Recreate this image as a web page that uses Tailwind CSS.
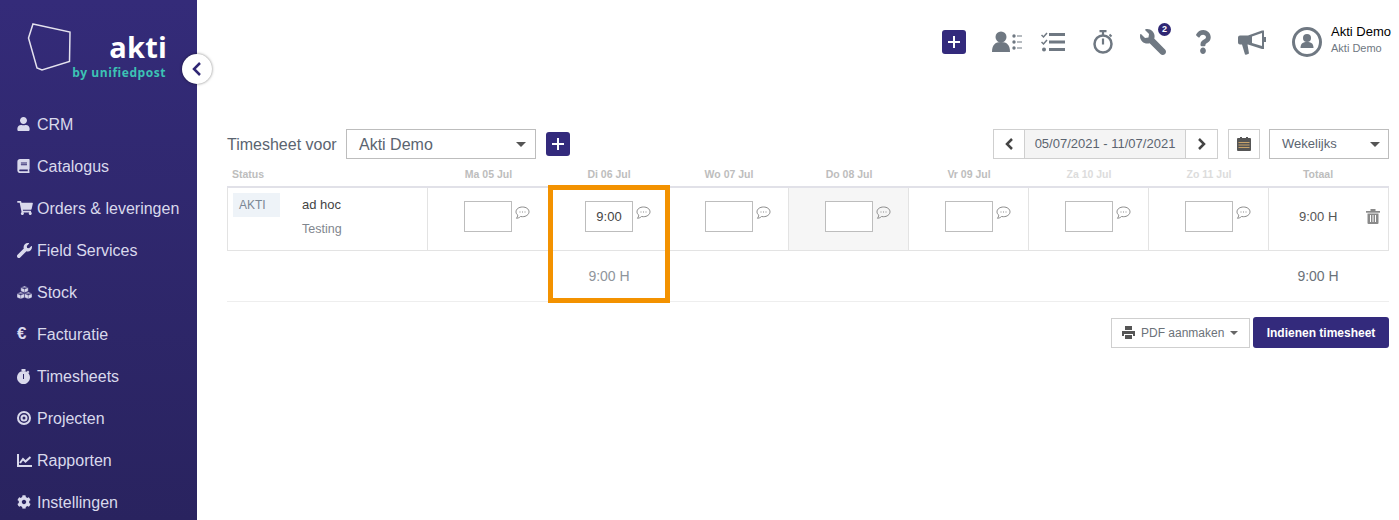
<!DOCTYPE html>
<html lang="en">
<head>
  <meta charset="UTF-8">
  <title>Timesheets</title>
  <script src="https://cdn.jsdelivr.net/npm/@tailwindcss/browser@4"></script>
</head>
<body class="bg-white font-['Liberation_Sans',Arial,sans-serif] h-[520px] overflow-hidden">
<div class="flex h-[520px] overflow-hidden">

  <!-- Sidebar -->
  <aside class="relative w-[197px] shrink-0 bg-gradient-to-b from-[#342b79] to-[#29235f] text-[#d9d9ec]">
    <div class="h-[104px] relative">
      <svg class="absolute left-[27px] top-[22px]" width="46" height="50" viewBox="0 0 46 50" fill="none" stroke="#e4e2ee" stroke-width="1.5"><path d="M6 2 L43 10 L42.500 39.500 L15 48 L10 46 L1.500 16 Z"/></svg>
      <div class="absolute right-[30px] top-[32px] text-[29px] leading-[30px] font-bold text-white font-['Open_Sans',sans-serif] tracking-[0.2px]">akti</div>
      <div class="absolute right-[31px] top-[65px] text-[12px] leading-[16px] font-bold text-[#3cc3b4] font-['Open_Sans',sans-serif] tracking-[0.55px] whitespace-nowrap">by unifiedpost</div>
    </div>
    <nav>
      <a class="flex items-center h-[42px] pl-[17px] text-[16px]"><span class="w-[20px] shrink-0 -mt-[2px]"><svg class="w-[13px] h-[14px]" viewBox="0 0 448 512" fill="#d9d9ec"><path d="M224 256c70.7 0 128-57.3 128-128S294.700 0 224 0 96 57.300 96 128s57.300 128 128 128zm89.600 32h-16.700c-22.200 10.200-46.900 16-72.900 16s-50.600-5.800-72.900-16h-16.700C60.200 288 0 348.200 0 422.400V464c0 26.500 21.500 48 48 48h352c26.500 0 48-21.500 48-48v-41.600c0-74.200-60.200-134.400-134.400-134.400z"/></svg></span>CRM</a>
      <a class="flex items-center h-[42px] pl-[17px] text-[16px]"><span class="w-[20px] shrink-0 -mt-[2px]"><svg class="w-[13px] h-[14px]" viewBox="0 0 448 512" fill="#d9d9ec"><path d="M448 360V24c0-13.300-10.700-24-24-24H96C43 0 0 43 0 96v320c0 53 43 96 96 96h328c13.300 0 24-10.700 24-24v-16c0-7.500-3.500-14.300-8.900-18.700-4.200-15.400-4.200-59.300 0-74.700 5.400-4.300 8.900-11.100 8.900-18.600zM128 134c0-3.300 2.700-6 6-6h212c3.300 0 6 2.700 6 6v20c0 3.300-2.700 6-6 6H134c-3.300 0-6-2.700-6-6v-20zm0 64c0-3.300 2.700-6 6-6h212c3.300 0 6 2.700 6 6v20c0 3.300-2.700 6-6 6H134c-3.300 0-6-2.700-6-6v-20zm253.400 250H96c-17.700 0-32-14.300-32-32 0-17.600 14.400-32 32-32h285.400c-1.900 17.100-1.900 46.900 0 64z"/></svg></span>Catalogus</a>
      <a class="flex items-center h-[42px] pl-[17px] text-[16px]"><span class="w-[20px] shrink-0 -mt-[2px]"><svg class="w-[16px] h-[14px]" viewBox="0 0 576 512" fill="#d9d9ec"><path d="M528.120 301.319l47.273-208C578.806 78.301 567.391 64 551.990 64H159.208l-9.166-44.810C147.758 8.021 137.930 0 126.529 0H24C10.745 0 0 10.745 0 24v16c0 13.255 10.745 24 24 24h69.883l70.248 343.435C147.325 417.100 136 435.222 136 456c0 30.928 25.072 56 56 56s56-25.072 56-56c0-15.674-6.447-29.835-16.824-40h209.647C430.447 426.165 424 440.326 424 456c0 30.928 25.072 56 56 56s56-25.072 56-56c0-22.172-12.888-41.332-31.579-50.405l5.517-24.276c3.413-15.018-8.002-29.319-23.403-29.319H218.117l-6.545-32h293.145c11.206 0 20.920-7.754 23.403-18.681z"/></svg></span>Orders &amp; leveringen</a>
      <a class="flex items-center h-[42px] pl-[17px] text-[16px]"><span class="w-[20px] shrink-0 -mt-[2px]"><svg class="w-[15px] h-[15px]" viewBox="0 0 512 512" fill="#d9d9ec"><path d="M507.730 109.100c-2.240-9.030-13.540-12.090-20.120-5.510l-74.360 74.360-67.880-11.310-11.310-67.880 74.360-74.360c6.620-6.620 3.430-17.900-5.660-20.160-47.380-11.740-99.550.91-136.580 37.930-39.640 39.640-50.550 97.100-34.050 147.200L18.740 402.760c-24.990 24.990-24.990 65.510 0 90.500 24.990 24.990 65.510 24.990 90.500 0l213.210-213.210c50.120 16.710 107.470 5.680 147.370-34.220 37.070-37.070 49.700-89.320 37.910-136.730z"/></svg></span>Field Services</a>
      <a class="flex items-center h-[42px] pl-[17px] text-[16px]"><span class="w-[20px] shrink-0 -mt-[2px]"><svg class="w-[15px] h-[13px]" viewBox="0 0 15 13" fill="#d9d9ec" stroke="#2f2870" stroke-width="0.400"><path d="M7.500 0 L11.200 1.500 V5.200 L7.500 6.700 L3.800 5.200 V1.500 Z M3.800 1.500 L7.500 3 L11.200 1.500 M7.500 3 V6.700"/><path d="M3.700 6.100 L7.400 7.600 V11.500 L3.700 13 L0 11.500 V7.600 Z M0 7.600 L3.700 9.100 L7.400 7.600 M3.700 9.100 V13"/><path d="M11.300 6.100 L15 7.600 V11.500 L11.300 13 L7.600 11.500 V7.600 Z M7.600 7.600 L11.300 9.100 L15 7.600 M11.300 9.100 V13"/></svg></span>Stock</a>
      <a class="flex items-center h-[42px] pl-[17px] text-[16px]"><span class="w-[20px] shrink-0 text-[17px] font-bold leading-[16px] -mt-[2px]">€</span>Facturatie</a>
      <a class="flex items-center h-[42px] pl-[17px] text-[16px]"><span class="w-[20px] shrink-0 -mt-[2px]"><svg class="w-[13px] h-[15px]" viewBox="0 0 13 15" fill="#d9d9ec"><rect x="4.500" y="0" width="4" height="2"/><rect x="10" y="2" width="2" height="2" transform="rotate(45 11 3)"/><path fill-rule="evenodd" d="M6.500 2a6.500 6.500 0 1 0 .001 0z M6 5v5h1V5z"/></svg></span>Timesheets</a>
      <a class="flex items-center h-[42px] pl-[17px] text-[16px]"><span class="w-[20px] shrink-0 -mt-[2px]"><svg class="w-[14px] h-[14px]" viewBox="0 0 14 14" fill="none" stroke="#d9d9ec"><circle cx="7" cy="7" r="6" stroke-width="2"/><circle cx="7" cy="7" r="2.500" stroke-width="2"/></svg></span>Projecten</a>
      <a class="flex items-center h-[42px] pl-[17px] text-[16px]"><span class="w-[20px] shrink-0 -mt-[2px]"><svg class="w-[15px] h-[13px]" viewBox="0 0 15 13" fill="none" stroke="#d9d9ec" stroke-width="2"><path d="M1 0 V12 H15"/><path d="M3 9 L6 5 L8.500 7.500 L13.500 3"/></svg></span>Rapporten</a>
      <a class="flex items-center h-[42px] pl-[17px] text-[16px]"><span class="w-[20px] shrink-0 -mt-[2px]"><svg class="w-[14px] h-[14px]" viewBox="0 0 512 512" fill="#d9d9ec"><path d="M487.400 315.700l-42.600-24.600c4.300-23.200 4.300-47 0-70.200l42.600-24.600c4.900-2.800 7.100-8.600 5.500-14-11.100-35.600-30-67.800-54.700-94.600-3.800-4.100-10-5.100-14.800-2.300L380.800 110c-17.900-15.400-38.500-27.300-60.800-35.100V25.800c0-5.600-3.900-10.500-9.400-11.700-36.700-8.200-74.300-7.800-109.200 0-5.500 1.200-9.400 6.100-9.400 11.700V75c-22.200 7.900-42.800 19.800-60.800 35.100L88.700 85.500c-4.900-2.800-11-1.900-14.800 2.300-24.700 26.700-43.600 58.900-54.700 94.600-1.700 5.400.6 11.200 5.500 14L67.300 221c-4.300 23.200-4.300 47 0 70.200l-42.600 24.600c-4.900 2.800-7.100 8.600-5.500 14 11.100 35.600 30 67.800 54.700 94.600 3.800 4.100 10 5.100 14.800 2.300l42.600-24.600c17.900 15.400 38.500 27.300 60.800 35.100v49.200c0 5.600 3.900 10.500 9.400 11.700 36.700 8.200 74.300 7.800 109.200 0 5.500-1.200 9.400-6.100 9.400-11.700v-49.200c22.200-7.900 42.800-19.800 60.800-35.100l42.600 24.600c4.900 2.800 11 1.900 14.800-2.300 24.700-26.700 43.600-58.900 54.700-94.600 1.500-5.500-.7-11.300-5.600-14.100zM256 336c-44.100 0-80-35.900-80-80s35.900-80 80-80 80 35.900 80 80-35.900 80-80 80z"/></svg></span>Instellingen</a>
    </nav>
    <button class="absolute left-[182px] top-[54px] w-[30px] h-[30px] rounded-full bg-white shadow-[0_0_3px_rgba(0,0,0,0.5)] flex items-center justify-center">
      <svg width="10" height="14" viewBox="0 0 10 14" fill="none" stroke="#2f2774" stroke-width="2.500"><path d="M8 1 L2 7 L8 13"/></svg>
    </button>
  </aside>

  <!-- Main -->
  <main class="flex-1 min-w-0 pl-[30px] pr-[10px] text-[#5b6470]">

    <!-- Top bar -->
    <header class="h-[84px] -mr-[2px] flex items-center justify-end">
      <button class="w-[24px] h-[24px] rounded-[3px] bg-[#332a7c] flex items-center justify-center">
        <svg width="12" height="12" viewBox="0 0 12 12" stroke="white" stroke-width="2"><path d="M6 0V12M0 6H12"/></svg>
      </button>
      <svg class="ml-[26px]" width="30" height="22" viewBox="0 0 30 22" fill="#6f7882"><circle cx="9" cy="6" r="5.500"/><path d="M0 21c0-7 3-10 9-10s9 3 9 10z"/><circle cx="22" cy="5" r="1.700"/><circle cx="22" cy="11" r="1.700"/><circle cx="22" cy="17" r="1.700"/><rect x="25" y="4.500" width="5" height="1"/><rect x="25" y="10.500" width="5" height="1"/><rect x="25" y="16.500" width="5" height="1"/></svg>
      <svg class="ml-[19px]" width="24" height="20" viewBox="0 0 24 20" fill="#6f7882"><path d="M0.500 3 L2.500 5 L6 1" fill="none" stroke="#6f7882" stroke-width="1.500"/><path d="M0.500 10 L2.500 12 L6 8" fill="none" stroke="#6f7882" stroke-width="1.500"/><circle cx="3" cy="17.500" r="2"/><rect x="8" y="1" width="16" height="3"/><rect x="8" y="8.500" width="16" height="3"/><rect x="8" y="16" width="16" height="3"/></svg>
      <svg class="ml-[28px]" width="20" height="24" viewBox="0 0 20 24" fill="none" stroke="#6f7882"><circle cx="10" cy="14" r="8.500" stroke-width="2.500"/><path d="M6.500 1.200H13.500M10 1.500V5" stroke-width="2.200"/><path d="M16.500 4.500L18.500 6.500" stroke-width="2"/><path d="M10 8.500V14.500" stroke-width="2.200"/></svg>
      <div class="relative ml-[27px] w-[26px] h-[26px]">
        <svg width="26" height="26" viewBox="0 0 512 512" fill="#6f7882" class="absolute left-0 top-0"><path d="M4.270 109.100c2.240-9.030 13.540-12.090 20.120-5.510l74.360 74.360 67.880-11.310 11.310-67.880-74.360-74.360c-6.620-6.620-3.430-17.900 5.660-20.160 47.380-11.740 99.550.91 136.580 37.930 39.640 39.640 50.550 97.100 34.050 147.200l213.390 213.390c24.990 24.990 24.990 65.510 0 90.500-24.990 24.990-65.510 24.990-90.500 0L189.550 280.050c-50.120 16.710-107.470 5.680-147.370-34.220C5.110 208.760-7.520 156.510 4.270 109.100z"/></svg>
        <span class="absolute left-[18px] -top-[6px] w-[13px] h-[13px] rounded-full bg-[#2f2774] text-white text-[9px] leading-[13px] font-bold text-center">2</span>
      </div>
      <svg class="ml-[29px]" width="16" height="24" viewBox="0 0 384 512" fill="#6f7882" preserveAspectRatio="none"><path d="M202.021 0C122.202 0 70.503 32.703 29.914 91.026c-7.363 10.580-5.093 25.086 5.178 32.874l43.138 32.709c10.373 7.865 25.132 6.026 33.253-4.148 25.049-31.381 43.630-49.449 82.757-49.449 30.764 0 68.816 19.799 68.816 49.631 0 22.552-18.617 34.134-48.993 51.164-35.423 19.860-82.299 44.576-82.299 106.405V320c0 13.255 10.745 24 24 24h72.471c13.255 0 24-10.745 24-24v-5.773c0-42.860 125.268-44.645 125.268-160.627C377.504 66.256 286.902 0 202.021 0zM192 373.459c-38.196 0-69.271 31.075-69.271 69.271 0 38.195 31.075 69.270 69.271 69.270s69.271-31.075 69.271-69.271-31.075-69.270-69.271-69.270z"/></svg>
      <svg class="ml-[27px]" width="28" height="25" viewBox="0 0 28 25" fill="#6f7882"><path d="M0 7.500Q0 5.500 2 5.500H10L24 0.500H26V19H24L10 14.500H9.500L11 23.500Q9 25 7 24.500L4 14.500H2Q0 14.500 0 12.500Z"/><path d="M24 3L14 6.500V13L24 16Z" fill="white"/><rect x="26" y="7" width="2" height="5"/></svg>
      <svg class="ml-[26px]" width="30" height="30" viewBox="0 0 30 30" fill="#6f7882"><circle cx="15" cy="15" r="13.500" fill="none" stroke="#6f7882" stroke-width="3"/><circle cx="15" cy="11" r="4"/><path d="M8.500 21c0-4.500 2.500-6 6.500-6s6.500 1.500 6.500 6z"/></svg>
      <div class="ml-[9px] w-[60px] -mt-[4px]">
        <div class="text-[13px] leading-[17px] text-black whitespace-nowrap">Akti Demo</div>
        <div class="text-[11px] leading-[17px] text-[#6f7882] whitespace-nowrap">Akti Demo</div>
      </div>
    </header>

    <!-- Toolbar -->
    <div class="mt-[45px] h-[30px] flex items-center">
      <span class="text-[16px] w-[119px] pt-[2px]">Timesheet voor</span>
      <div class="w-[190px] h-[30px] border border-[#bdbdbd] flex items-center justify-between pl-[12px] pr-[9px] pt-[1px] text-[16px]">Akti Demo<span class="border-x-[5px] border-x-transparent border-t-[5px] border-t-[#555]"></span></div>
      <button class="ml-[10px] w-[24px] h-[24px] rounded-[3px] bg-[#332a7c] flex items-center justify-center">
        <svg width="12" height="12" viewBox="0 0 12 12" stroke="white" stroke-width="2"><path d="M6 0V12M0 6H12"/></svg>
      </button>
      <div class="ml-auto flex h-[30px] border border-[#cfcfcf] w-[225px]">
        <span class="w-[30px] flex items-center justify-center"><svg width="9" height="12" viewBox="0 0 9 12" fill="none" stroke="#444" stroke-width="2.500"><path d="M7 1 L2 6 L7 11"/></svg></span>
        <span class="flex-1 bg-[#f4f4f4] border-x border-[#cfcfcf] text-[13px] leading-[28px] text-center">05/07/2021 - 11/07/2021</span>
        <span class="w-[31px] flex items-center justify-center"><svg width="9" height="12" viewBox="0 0 9 12" fill="none" stroke="#444" stroke-width="2.500"><path d="M2 1 L7 6 L2 11"/></svg></span>
      </div>
      <div class="ml-[10px] w-[32px] h-[30px] border border-[#cfcfcf] flex items-center justify-center">
        <svg width="14" height="14" viewBox="0 0 14 14"><rect x="0" y="1" width="14" height="13" rx="1" fill="#555"/><rect x="3" y="0" width="2" height="3" fill="#555"/><rect x="9" y="0" width="2" height="3" fill="#555"/><path d="M1.500 5.500H12.500M1.500 8H12.500M1.500 10.500H12.500" stroke="#c9a36a" stroke-width="1"/></svg>
      </div>
      <div class="ml-[9px] w-[120px] h-[30px] border border-[#bdbdbd] flex items-center justify-between pl-[12px] pr-[8px] text-[13px]">Wekelijks<span class="border-x-[5px] border-x-transparent border-t-[5px] border-t-[#555]"></span></div>
    </div>

    <!-- Timesheet table -->
    <div class="relative mt-[7px]">
      <div class="grid grid-cols-[201px_121px_repeat(7,120px)] h-[20px] pt-[1px] text-[10.5px] leading-[14px] font-bold text-[#bdbdbd] text-center">
        <div class="text-left pl-[5px]">Status</div>
        <div>Ma 05 Jul</div>
        <div>Di 06 Jul</div>
        <div>Wo 07 Jul</div>
        <div>Do 08 Jul</div>
        <div>Vr 09 Jul</div>
        <div class="text-[#dcdcdc]">Za 10 Jul</div>
        <div class="text-[#dcdcdc]">Zo 11 Jul</div>
        <div class="pr-[22px]">Totaal</div>
      </div>

      <div class="grid grid-cols-[201px_121px_repeat(7,120px)] h-[65px] border-t-2 border-t-[#e1e1e8] border-b border-b-[#e3e3e3]">
        <div class="border-x border-[#e3e3e3] flex pl-[5px] pt-[5px]">
          <span class="w-[47px] h-[24px] bg-[#eef3f8] pl-[6px] text-[12px] leading-[24px] text-[#7b8794]">AKTI</span>
          <div class="ml-[22px]">
            <div class="text-[13px] leading-[24px] text-[#444]">ad hoc</div>
            <div class="text-[12.500px] leading-[24px] text-[#7f868e]">Testing</div>
          </div>
        </div>
        <div class="border-r border-[#e3e3e3] flex items-start pl-[36px] pt-[13px]">
          <div class="w-[48px] h-[31px] border border-[#bdbdbd]"></div>
          <svg class="ml-[3px] mt-[5px]" width="15" height="14" viewBox="0 0 15 14" fill="none" stroke="#8a8a8a"><path d="M7.500 1C3.900 1 1 3 1 5.800C1 7.200 1.700 8.300 2.800 9.200C2.700 10.500 2 11.500 1.500 12.300C3 12.200 4.700 11.500 5.500 10.500C6.200 10.600 6.800 10.700 7.500 10.700C11.100 10.700 14 8.500 14 5.800C14 3 11.100 1 7.500 1Z"/><path d="M4.500 6H5.500M7 6H8M9.500 6H10.500" stroke-width="1.200"/></svg>
        </div>
        <div class="border-r border-[#e3e3e3] flex items-start pl-[36px] pt-[13px]">
          <div class="w-[48px] h-[31px] border border-[#bdbdbd] text-[13px] leading-[29px] text-center text-[#444]">9:00</div>
          <svg class="ml-[3px] mt-[5px]" width="15" height="14" viewBox="0 0 15 14" fill="none" stroke="#8a8a8a"><path d="M7.500 1C3.900 1 1 3 1 5.800C1 7.200 1.700 8.300 2.800 9.200C2.700 10.500 2 11.500 1.500 12.300C3 12.200 4.700 11.500 5.500 10.500C6.200 10.600 6.800 10.700 7.500 10.700C11.100 10.700 14 8.500 14 5.800C14 3 11.100 1 7.500 1Z"/><path d="M4.500 6H5.500M7 6H8M9.500 6H10.500" stroke-width="1.200"/></svg>
        </div>
        <div class="border-r border-[#e3e3e3] flex items-start pl-[36px] pt-[13px]">
          <div class="w-[48px] h-[31px] border border-[#bdbdbd]"></div>
          <svg class="ml-[3px] mt-[5px]" width="15" height="14" viewBox="0 0 15 14" fill="none" stroke="#8a8a8a"><path d="M7.500 1C3.900 1 1 3 1 5.800C1 7.200 1.700 8.300 2.800 9.200C2.700 10.500 2 11.500 1.500 12.300C3 12.200 4.700 11.500 5.500 10.500C6.200 10.600 6.800 10.700 7.500 10.700C11.100 10.700 14 8.500 14 5.800C14 3 11.100 1 7.500 1Z"/><path d="M4.500 6H5.500M7 6H8M9.500 6H10.500" stroke-width="1.200"/></svg>
        </div>
        <div class="bg-[#f6f6f6] border-r border-[#e3e3e3] flex items-start pl-[36px] pt-[13px]">
          <div class="w-[48px] h-[31px] border border-[#bdbdbd] bg-white"></div>
          <svg class="ml-[3px] mt-[5px]" width="15" height="14" viewBox="0 0 15 14" fill="none" stroke="#8a8a8a"><path d="M7.500 1C3.900 1 1 3 1 5.800C1 7.200 1.700 8.300 2.800 9.200C2.700 10.500 2 11.500 1.500 12.300C3 12.200 4.700 11.500 5.500 10.500C6.200 10.600 6.800 10.700 7.500 10.700C11.100 10.700 14 8.500 14 5.800C14 3 11.100 1 7.500 1Z"/><path d="M4.500 6H5.500M7 6H8M9.500 6H10.500" stroke-width="1.200"/></svg>
        </div>
        <div class="border-r border-[#e3e3e3] flex items-start pl-[36px] pt-[13px]">
          <div class="w-[48px] h-[31px] border border-[#bdbdbd]"></div>
          <svg class="ml-[3px] mt-[5px]" width="15" height="14" viewBox="0 0 15 14" fill="none" stroke="#8a8a8a"><path d="M7.500 1C3.900 1 1 3 1 5.800C1 7.200 1.700 8.300 2.800 9.200C2.700 10.500 2 11.500 1.500 12.300C3 12.200 4.700 11.500 5.500 10.500C6.200 10.600 6.800 10.700 7.500 10.700C11.100 10.700 14 8.500 14 5.800C14 3 11.100 1 7.500 1Z"/><path d="M4.500 6H5.500M7 6H8M9.500 6H10.500" stroke-width="1.200"/></svg>
        </div>
        <div class="border-r border-[#e3e3e3] flex items-start pl-[36px] pt-[13px]">
          <div class="w-[48px] h-[31px] border border-[#bdbdbd]"></div>
          <svg class="ml-[3px] mt-[5px]" width="15" height="14" viewBox="0 0 15 14" fill="none" stroke="#8a8a8a"><path d="M7.500 1C3.900 1 1 3 1 5.800C1 7.200 1.700 8.300 2.800 9.200C2.700 10.500 2 11.500 1.500 12.300C3 12.200 4.700 11.500 5.500 10.500C6.200 10.600 6.800 10.700 7.500 10.700C11.100 10.700 14 8.500 14 5.800C14 3 11.100 1 7.500 1Z"/><path d="M4.500 6H5.500M7 6H8M9.500 6H10.500" stroke-width="1.200"/></svg>
        </div>
        <div class="border-r border-[#e3e3e3] flex items-start pl-[36px] pt-[13px]">
          <div class="w-[48px] h-[31px] border border-[#bdbdbd]"></div>
          <svg class="ml-[3px] mt-[5px]" width="15" height="14" viewBox="0 0 15 14" fill="none" stroke="#8a8a8a"><path d="M7.500 1C3.900 1 1 3 1 5.800C1 7.200 1.700 8.300 2.800 9.200C2.700 10.500 2 11.500 1.500 12.300C3 12.200 4.700 11.500 5.500 10.500C6.200 10.600 6.800 10.700 7.500 10.700C11.100 10.700 14 8.500 14 5.800C14 3 11.100 1 7.500 1Z"/><path d="M4.500 6H5.500M7 6H8M9.500 6H10.500" stroke-width="1.200"/></svg>
        </div>
        <div class="border-r border-[#e3e3e3] flex items-start pt-[20px] pl-[30px]">
          <span class="text-[13px] leading-[17px] text-[#555]">9:00 H</span>
          <svg class="ml-[29px] mt-[1px]" width="14" height="15" viewBox="0 0 14 15" fill="#8a8a8a"><rect x="0" y="2" width="14" height="1.700"/><rect x="4.500" y="0" width="5" height="2"/><path fill-rule="evenodd" d="M1.500 4.500H12.500V14Q12.500 15 11.500 15H2.500Q1.500 15 1.500 14Z M4 6V13H5V6Z M6.500 6V13H7.500V6Z M9 6V13H10V6Z"/></svg>
        </div>
      </div>

      <div class="grid grid-cols-[201px_121px_repeat(7,120px)] h-[51px] border-b border-b-[#eeeeee] text-[14px] leading-[50px] text-center">
        <div></div>
        <div></div>
        <div class="text-[#8f959c]">9:00 H</div>
        <div></div>
        <div></div>
        <div></div>
        <div></div>
        <div></div>
        <div class="pr-[22px] text-[#6b7279]">9:00 H</div>
      </div>

      <!-- highlight -->
      <div class="absolute left-[321px] top-[19px] w-[122px] h-[118px] border-[5px] border-[#f39200]"></div>
    </div>

    <!-- Actions -->
    <div class="mt-[15px] flex justify-end items-center gap-[3px]">
      <button class="w-[139px] h-[30px] border border-[#cfcfcf] flex items-center pl-[10px] text-[12px] text-[#6b7279]">
        <svg class="mr-[6px]" width="13" height="13" viewBox="0 0 13 13" fill="#555"><path fill-rule="evenodd" d="M3 0H10V4H3Z M0 5H13V10H11V8H2V10H0Z"/><rect x="3" y="9" width="7" height="4"/></svg>
        PDF aanmaken
        <span class="ml-[6px] border-x-[4px] border-x-transparent border-t-[4px] border-t-[#666]"></span>
      </button>
      <button class="w-[136px] h-[31px] rounded-[3px] bg-[#332a7c] text-white text-[12px] font-bold">Indienen timesheet</button>
    </div>
  </main>
</div>
</body>
</html>
